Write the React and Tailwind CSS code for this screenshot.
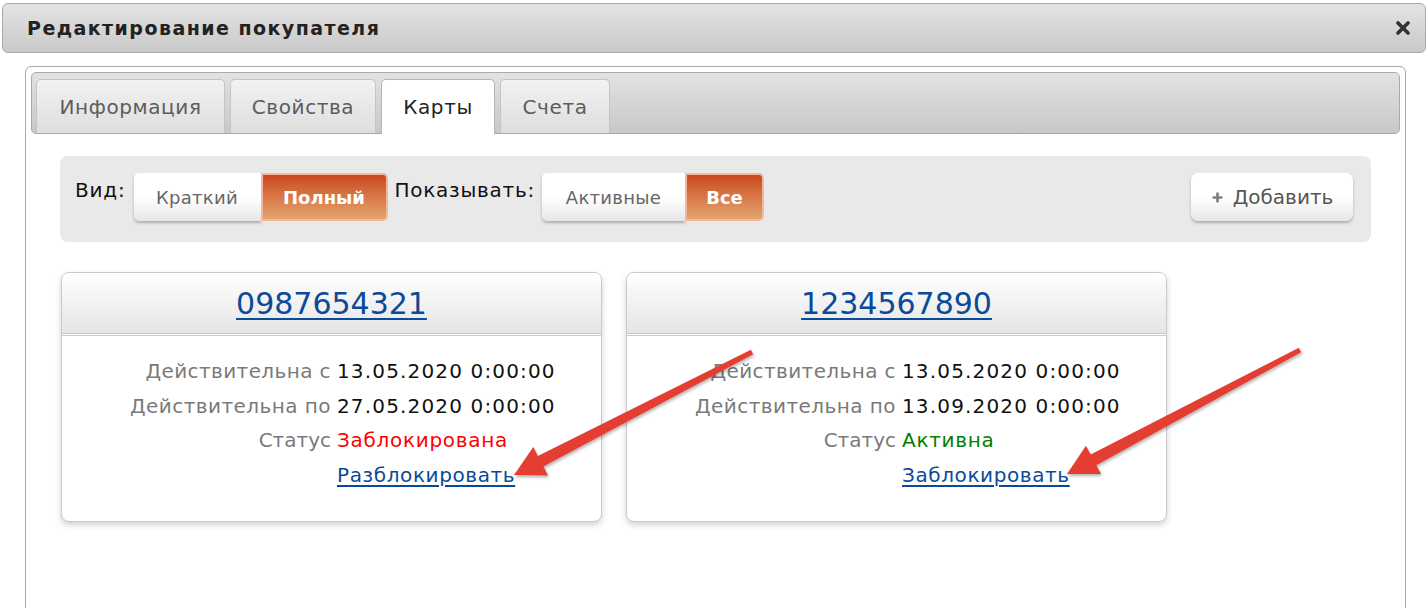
import { Plus } from "lucide-react";

const cards = [
  {
    number: "0987654321",
    from: "13.05.2020 0:00:00",
    to: "27.05.2020 0:00:00",
    status: "Заблокирована",
    statusClass: "text-[#ff0000]",
    action: "Разблокировать",
  },
  {
    number: "1234567890",
    from: "13.05.2020 0:00:00",
    to: "13.09.2020 0:00:00",
    status: "Активна",
    statusClass: "text-[#008000]",
    action: "Заблокировать",
  },
];

// tapered arrow polygon from start to tip
function arrowPoints(sx, sy, tx, ty) {
  const dx = tx - sx;
  const dy = ty - sy;
  const len = Math.hypot(dx, dy);
  const ux = dx / len;
  const uy = dy / len;
  const nx = -uy;
  const ny = ux;
  const headLen = 30;
  const headW = 16;
  const bx = tx - ux * headLen;
  const by = ty - uy * headLen;
  const w0 = 2.5;
  const w1 = 6;
  const pts = [
    [sx + nx * w0, sy + ny * w0],
    [bx + nx * w1, by + ny * w1],
    [bx + nx * headW, by + ny * headW],
    [tx, ty],
    [bx - nx * headW, by - ny * headW],
    [bx - nx * w1, by - ny * w1],
    [sx - nx * w0, sy - ny * w0],
  ];
  return pts.map((p) => p.join(",")).join(" ");
}

function Tab({ label, active, width }) {
  return (
    <div
      className={
        "h-[54px] flex items-center justify-center rounded-t-[5px] border border-b-0 text-[20px] tracking-[0.6px] " +
        width +
        (active
          ? " bg-white border-[#b5b5b5] text-[#222] h-[55px] -mb-px"
          : " bg-gradient-to-b from-[#f2f2f2] to-[#dedede] border-[#c4c4c4] text-[#5c5c5c]")
      }
    >
      {label}
    </div>
  );
}

function SegButton({ label, active, width, first }) {
  if (active) {
    return (
      <div
        className={
          "h-[48px] flex items-center justify-center text-[18px] font-bold text-white border-2 border-[#f6b797] bg-gradient-to-b from-[#c9471b] to-[#e3a46f] " +
          width +
          (first ? " rounded-l-[5px]" : " rounded-r-[5px]")
        }
      >
        {label}
      </div>
    );
  }
  return (
    <div
      className={
        "h-[48px] flex items-center justify-center text-[18px] tracking-[0.3px] text-[#666] bg-gradient-to-b from-white via-white to-[#e6e6e6] shadow-[0_2px_3px_rgba(0,0,0,0.25)] " +
        width +
        (first ? " rounded-l-[5px]" : " rounded-r-[5px]")
      }
    >
      {label}
    </div>
  );
}

function Card({ card }) {
  return (
    <div className="w-[541px] h-[250px] rounded-[8px] border border-[#c9c9c9] bg-white shadow-[0_3px_6px_rgba(0,0,0,0.18)] overflow-hidden">
      <div className="h-[63px] flex items-center justify-center bg-gradient-to-b from-white to-[#e5e5e5] border-b-[3px] border-double border-[#c8c8c8]">
        <a href="#" className="text-[30px] text-[#0b4a99] underline underline-offset-[4px] decoration-[2px]">
          {card.number}
        </a>
      </div>
      <div className="grid grid-cols-[269px_1fr] gap-x-[6px] pt-[18px] text-[20px] leading-[34.7px]">
        <div className="text-right text-[#7a7a7a] tracking-[0.4px]">Действительна с</div>
        <div className="text-[#111] tracking-[1.15px]">{card.from}</div>
        <div className="text-right text-[#7a7a7a] tracking-[0.45px]">Действительна по</div>
        <div className="text-[#111] tracking-[1.15px]">{card.to}</div>
        <div className="text-right text-[#7a7a7a]">Статус</div>
        <div className={card.statusClass + " tracking-[0.7px]"}>{card.status}</div>
        <div />
        <div>
          <a href="#" className="text-[#0b4a99] underline underline-offset-[3px] tracking-[0.6px]">
            {card.action}
          </a>
        </div>
      </div>
    </div>
  );
}

export default function App() {
  return (
    <div className="relative w-[1428px] h-[608px] overflow-hidden bg-white font-['DejaVu_Sans',sans-serif]">
      {/* Title bar */}
      <div className="mx-[2px] mt-[3px] h-[50px] rounded-[6px] border border-[#a8a8a8] bg-gradient-to-b from-[#e4e4e4] to-[#c9c9c9] flex items-center justify-between pl-[24px] pr-[15px]">
        <h1 className="text-[19px] font-bold text-[#222] tracking-[1.45px]">
          Редактирование покупателя
        </h1>
        <svg width="14" height="14" viewBox="0 0 14 14">
          <path d="M2 2 L12 12 M12 2 L2 12" stroke="#333" strokeWidth="3.6" strokeLinecap="round" />
        </svg>
      </div>

      {/* Content panel */}
      <div className="ml-[25px] mr-[22px] mt-[13px] h-[600px] rounded-t-[6px] border border-[#aaaaaa] px-[5px] pt-[5px]">
        {/* Tab bar */}
        <div className="h-[62px] rounded-[5px] border border-[#aaaaaa] bg-gradient-to-b from-[#e2e2e2] to-[#c8c8c8] flex items-end pl-[4px] gap-[5px]">
          <Tab label="Информация" width="w-[189px]" />
          <Tab label="Свойства" width="w-[146px]" />
          <Tab label="Карты" width="w-[114px]" active />
          <Tab label="Счета" width="w-[110px]" />
        </div>

        {/* Toolbar */}
        <div className="mt-[22px] ml-[29px] mr-[29px] h-[86px] rounded-[8px] bg-[#e9e9e9] flex items-start pl-[15px] pr-[18px] pt-[17px]">
          <span className="mt-[2px] mr-[8px] text-[20px] tracking-[0.8px] text-[#111]">Вид:</span>
          <SegButton label="Краткий" width="w-[127px]" first />
          <SegButton label="Полный" width="w-[127px]" active />
          <span className="mt-[2px] ml-[7px] mr-[7px] text-[20px] tracking-[0.75px] text-[#111]">Показывать:</span>
          <SegButton label="Активные" width="w-[143px]" first />
          <SegButton label="Все" width="w-[79px]" active />
          <div className="ml-auto h-[48px] w-[162px] rounded-[7px] flex items-center justify-center gap-[9px] text-[20px] text-[#555] bg-gradient-to-b from-white via-white to-[#e6e6e6] shadow-[0_2px_3px_rgba(0,0,0,0.25)]">
            <Plus size={13} strokeWidth={5} className="text-[#808080]" />
            Добавить
          </div>
        </div>

        {/* Cards */}
        <div className="mt-[30px] ml-[30px] flex gap-[24px]">
          {cards.map((c) => (
            <Card key={c.number} card={c} />
          ))}
        </div>
      </div>

      {/* Annotation arrows */}
      <svg className="absolute inset-0 pointer-events-none" width="1428" height="608">
        <defs>
          <filter id="sh" x="-10%" y="-10%" width="120%" height="130%">
            <feDropShadow dx="1" dy="2" stdDeviation="1.5" floodColor="#000" floodOpacity="0.3" />
          </filter>
        </defs>
        <polygon points={arrowPoints(752, 352, 514, 475)} fill="#e43d30" filter="url(#sh)" />
        <polygon points={arrowPoints(1300, 350, 1067, 474)} fill="#e43d30" filter="url(#sh)" />
      </svg>
    </div>
  );
}
